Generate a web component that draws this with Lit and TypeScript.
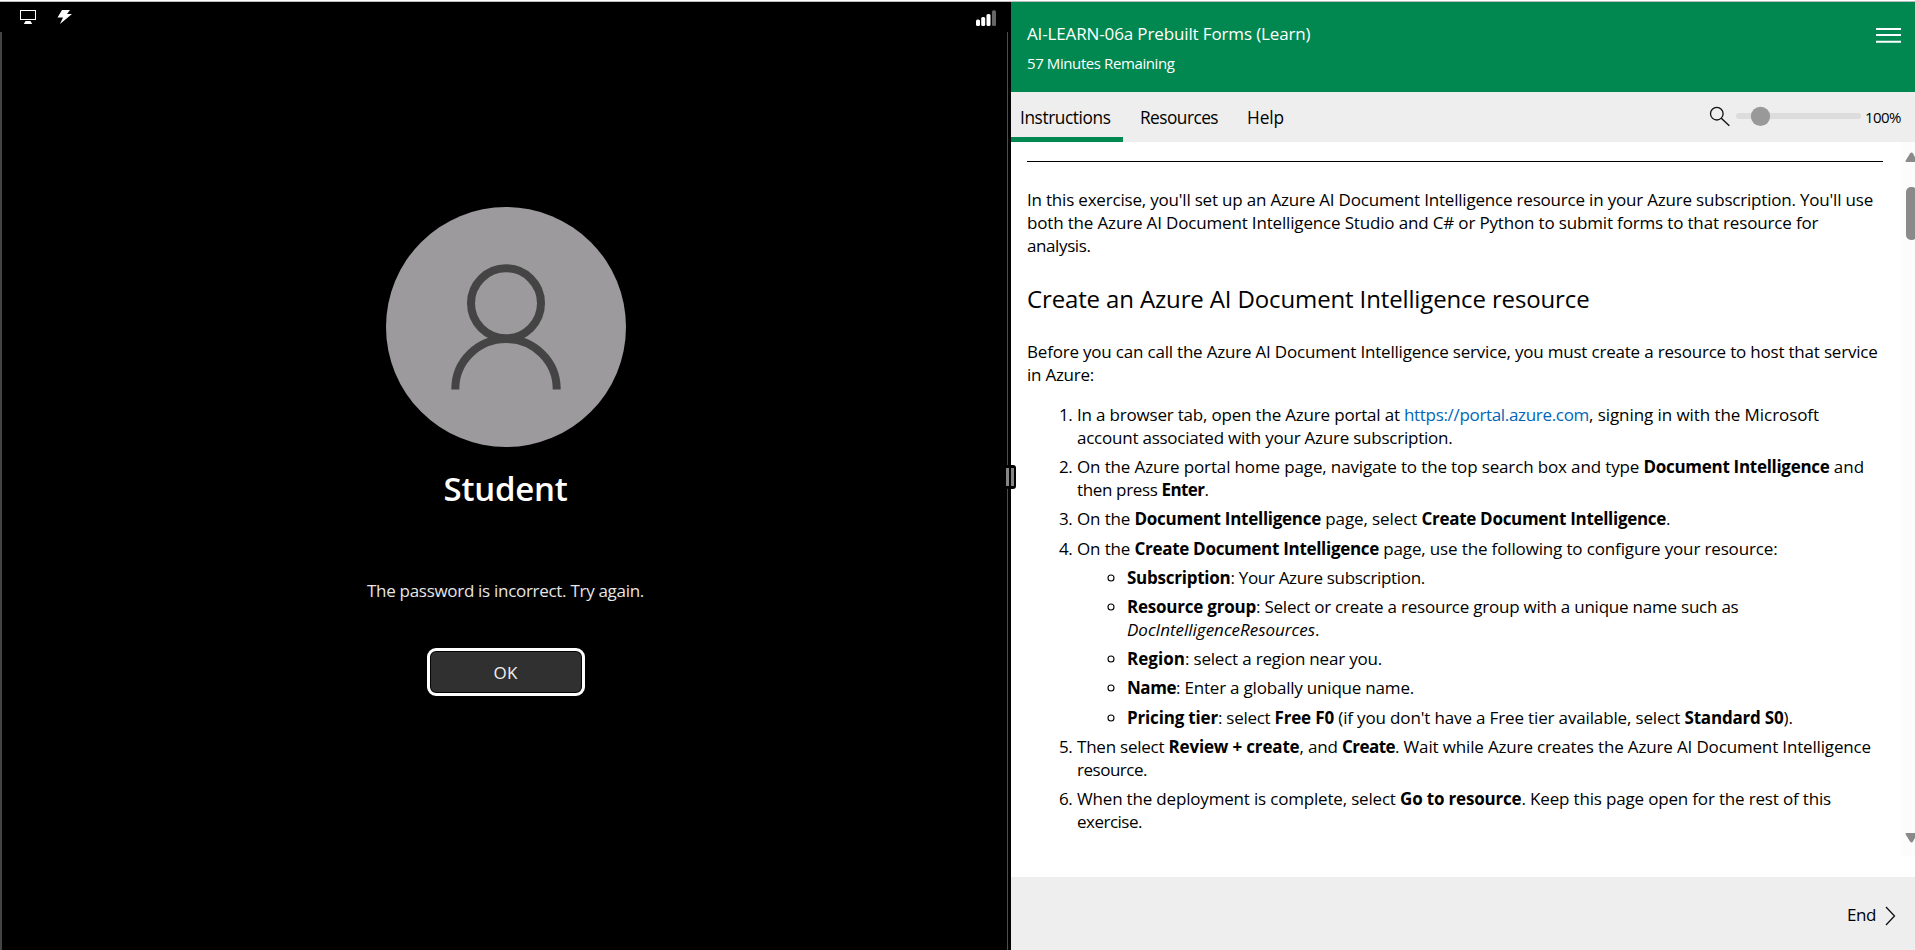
import { LitElement, html, css, TemplateResult } from "lit";
import { customElement, property } from "lit/decorators.js";

/** A run of text tracked so that it occupies exactly `w` pixels. */
@customElement("fit-text")
class FitText extends LitElement {
  @property({ type: Number }) w = 0;
  @property() text = "";

  static styles = css`
    :host { display: inline-block; white-space: pre; vertical-align: baseline; }
    .run { display: inline-block; white-space: pre; }
  `;

  render() {
    return html`<span class="run">${this.text}</span>`;
  }

  updated() {
    this.fit();
    document.fonts.ready.then(() => this.fit());
  }

  private fit() {
    const run = this.renderRoot.querySelector(".run") as HTMLElement;
    if (!run || !this.w) return;
    run.style.letterSpacing = "0px";
    const natural = run.getBoundingClientRect().width;
    run.style.letterSpacing = `${(this.w - natural) / this.text.length}px`;
    this.style.width = `${this.w}px`;
  }
}

type Run = [text: string, width: number, kind?: "b" | "i" | "a"];
type Line = Run[];
interface Item { lines: Line[]; sub?: Item[]; }

const intro: Line[] = [
  [["In this exercise, you'll set up an Azure AI Document Intelligence resource in your Azure subscription. You'll use", 846]],
  [["both the Azure AI Document Intelligence Studio and C# or Python to submit forms to that resource for", 791.3]],
  [["analysis.", 63.5]],
];

const before: Line[] = [
  [["Before you can call the Azure AI Document Intelligence service, you must create a resource to host that service", 850.6]],
  [["in Azure:", 67]],
];

const steps: Item[] = [
  { lines: [
    [["In a browser tab, open the Azure portal at ", 327], ["https://portal.azure.com", 185, "a"], [", signing in with the Microsoft", 230]],
    [["account associated with your Azure subscription.", 375.5]],
  ] },
  { lines: [
    [["On the Azure portal home page, navigate to the top search box and type ", 566.5], ["Document Intelligence", 186, "b"], [" and", 34.5]],
    [["then press ", 84.5], ["Enter", 43, "b"], [".", 4.5]],
  ] },
  { lines: [[["On the ", 57.5], ["Document Intelligence", 186.5, "b"], [" page, select ", 100.5], ["Create Document Intelligence", 244.5, "b"], [".", 4.5]]] },
  {
    lines: [[["On the ", 57.5], ["Create Document Intelligence", 244.5, "b"], [" page, use the following to configure your resource:", 398.5]]],
    sub: [
      { lines: [[["Subscription", 103.5, "b"], [": Your Azure subscription.", 194.5]]] },
      { lines: [[["Resource group", 129, "b"], [": Select or create a resource group with a unique name such as", 482.5]], [["DocIntelligenceResources", 188, "i"], [".", 4.5]]] },
      { lines: [[["Region", 58, "b"], [": select a region near you.", 197]]] },
      { lines: [[["Name", 49, "b"], [": Enter a globally unique name.", 238]]] },
      { lines: [[["Pricing tier", 91, "b"], [": select ", 56.5], ["Free F0", 59.5, "b"], [" (if you don't have a Free tier available, select ", 350.5], ["Standard S0", 99, "b"], [").", 9.5]]] },
    ],
  },
  { lines: [
    [["Then select ", 91.5], ["Review + create", 131, "b"], [", and ", 42.5], ["Create", 53, "b"], [". Wait while Azure creates the Azure AI Document Intelligence", 476]],
    [["resource.", 70]],
  ] },
  { lines: [
    [["When the deployment is complete, select ", 323], ["Go to resource", 121.5, "b"], [". Keep this page open for the rest of this", 309.5]],
    [["exercise.", 65]],
  ] },
];

@customElement("app-root")
class AppRoot extends LitElement {
  static styles = css`
    :host { display: flex; flex-direction: column; width: 1915px; height: 950px; overflow: hidden; background: #fff; color: #000;
      font-family: "Open Sans", "Noto Sans", sans-serif; font-size: 17px; line-height: 23px; }
    * { box-sizing: border-box; }
    svg { display: block; flex: none; }
    .edge { height: 2px; flex: none; background: #fff; border-bottom: 1px solid #b9bdbb; }
    .split { flex: 1; display: flex; min-height: 0; }

    .remote { width: 1011px; flex: none; background: #000; display: flex; flex-direction: column; position: relative; }
    .status { height: 30px; flex: none; display: flex; justify-content: space-between; padding: 0 14px 0 19px; }
    .left-icons { display: flex; }
    .screen { flex: 1; margin-right: 3px; border-left: 2px solid #444; border-right: 1px solid #4d4d4d;
      display: flex; flex-direction: column; align-items: center; padding-top: 175px; padding-left: 2px; color: #fff; }
    .name { font-size: 33px; font-weight: 600; line-height: 44px; margin-top: 20px; }
    .msg { margin-top: 68px; line-height: 24px; color: #e6e6e6; font-size: 17px; }
    .ok { margin-top: 45px; width: 158px; height: 48px; border: 3px solid #fff; border-radius: 9px; background: #303030;
      box-shadow: inset 0 0 0 1px #050505; display: flex; align-items: center; justify-content: center; color: #f0f0f0; }
    .grip { position: absolute; left: 1005px; top: 463px; width: 11px; height: 24px; background: #000; border-radius: 3px; z-index: 2;
      display: flex; gap: 2px; padding: 3px 2px 3px 1px; }
    .grip span { flex: 1; background: #858585; }

    .lab { flex: 1; display: flex; flex-direction: column; min-width: 0; }
    .head { height: 90px; flex: none; background: #008850; color: #fff; display: flex; justify-content: space-between; padding: 20px 14px 0 16px; }
    .title { line-height: 24px; }
    .time { font-size: 15px; line-height: 20px; margin-top: 7px; }
    .burger { margin-top: 6px; }
    .bar { height: 50px; flex: none; background: #eee; display: flex; justify-content: space-between; padding-right: 14px; }
    .tabs { display: flex; gap: 8px; font-size: 17.3px; }
    .tab { padding: 14px 12px 0 9px; line-height: 24px; height: 50px; }
    .tab.on { border-bottom: 5px solid #008850; width: 112px; }
    .zoom { display: flex; font-size: 15px; }
    .pct { line-height: 20px; padding-top: 15px; margin-left: 4px; }
    .body { flex: 1; display: flex; min-height: 0; }
    .doc { width: 891px; flex: none; padding: 19px 0 0 16px; }
    .rule { width: 856px; height: 1px; background: #000; }
    .para { margin-top: 26px; }
    .line { display: block; height: 23px; white-space: nowrap; }
    .h2 { font-size: 24px; line-height: 34px; margin: 25px 0 0; font-weight: 400; }
    .para.second { margin-top: 24px; }
    ol, ul { margin: 0; padding: 0; list-style: none; }
    ol { margin-top: 17px; padding-left: 30px; }
    ul { padding-left: 30px; }
    li { display: flex; margin-bottom: 6.2px; }
    ul li:last-child { margin-bottom: 0; }
    ul { margin-top: 6.2px; }
    .num { width: 20px; flex: none; padding-left: 2px; }
    .ring { width: 20px; flex: none; padding: 8px 0 0 0; }
    .b { font-weight: 700; }
    .i { font-style: italic; }
    .a { color: #0067b8; }
    .scroll { flex: 1; background: #fcfcfc; height: 714px; display: flex; flex-direction: column; overflow: hidden; padding-left: 3px; }
    .thumb { width: 11px; height: 53px; flex: none; margin: 25px 0 0 1px; border-radius: 5px; background: #8a8a8a; }
    .up { margin-top: 10px; }
    .down { margin-top: 593px; }
    .foot { height: 73px; flex: none; background: #eee; display: flex; justify-content: flex-end; padding: 26px 19px 0 0; }
    .foot svg { margin: 3px 0 0 9px; }
    .foot fit-text { line-height: 24px; }
  `;

  private line(l: Line): TemplateResult {
    return html`<span class="line">${l.map(([t, w, k]) => html`<fit-text class=${k ?? "r"} .text=${t} .w=${w}></fit-text>`)}</span>`;
  }

  private item(it: Item, mark: TemplateResult): TemplateResult {
    return html`<li>${mark}<div>
      ${it.lines.map((l) => this.line(l))}
      ${it.sub ? html`<ul>${it.sub.map((s) => this.item(s, html`<span class="ring">
        <svg width="8" height="8" viewBox="0 0 8 8"><circle cx="4" cy="4" r="3" fill="none" stroke="#000" stroke-width="1.1"/></svg></span>`))}</ul>` : ""}
    </div></li>`;
  }

  render() {
    return html`
      <div class="edge"></div>
      <div class="split">
        <section class="remote">
          <div class="status">
            <div class="left-icons">
              <svg width="60" height="30" viewBox="19 2 60 30">
                <rect x="20.5" y="10.5" width="15" height="9" fill="none" stroke="#fff"/>
                <path d="M25.5 21h5l1.7 3h-8.4z" fill="#fff"/>
                <path d="M62 10h8l-3 4h5l-12 10 3-6.500h-5.500z" fill="#fff"/>
              </svg>
            </div>
            <svg width="21" height="30" viewBox="976 2 21 30">
              <rect x="976" y="19.500" width="4" height="6.500" rx="1.500" fill="#fff"/>
              <rect x="981.200" y="17" width="4" height="9" rx="1.500" fill="#fff"/>
              <rect x="986.500" y="14" width="4" height="12" rx="1.500" fill="#fff"/>
              <rect x="992" y="10.300" width="4" height="15.700" rx="1.500" fill="#666"/>
            </svg>
          </div>
          <div class="screen">
            <svg width="240" height="240" viewBox="0 0 240 240">
              <circle cx="120" cy="120" r="120" fill="#9c9a9c"/>
              <g fill="none" stroke="#444" stroke-width="8">
                <circle cx="120" cy="96.300" r="35"/>
                <path d="M69.300 182.500V182a50.700 50 0 0 1 101.400 0v.5"/>
              </g>
            </svg>
            <fit-text class="name" .text=${"Student"} .w=${124}></fit-text>
            <fit-text class="msg" .text=${"The password is incorrect. Try again."} .w=${277}></fit-text>
            <div class="ok"><fit-text .text=${"OK"} .w=${24}></fit-text></div>
          </div>
          <div class="grip"><span></span><span></span></div>
        </section>
        <section class="lab">
          <header class="head">
            <div>
              <div class="title"><fit-text .text=${"AI-LEARN-06a Prebuilt Forms (Learn)"} .w=${283.5}></fit-text></div>
              <div class="time"><fit-text .text=${"57 Minutes Remaining"} .w=${147.5}></fit-text></div>
            </div>
            <svg class="burger" width="25" height="16" viewBox="0 0 25 16">
              <path d="M0 1h25M0 7h25M0 13.700h25" stroke="#fff" stroke-width="1.900"/>
            </svg>
          </header>
          <nav class="bar">
            <div class="tabs">
              <div class="tab on"><fit-text .text=${"Instructions"} .w=${90.5}></fit-text></div>
              <div class="tab"><fit-text .text=${"Resources"} .w=${78}></fit-text></div>
              <div class="tab"><fit-text .text=${"Help"} .w=${37}></fit-text></div>
            </div>
            <div class="zoom">
              <svg width="152" height="50" viewBox="1709 92 152 50">
                <circle cx="1716.800" cy="113.700" r="6.300" fill="none" stroke="#111" stroke-width="1.300"/>
                <path d="M1721.300 118.200l8 7.600" stroke="#111" stroke-width="1.400"/>
                <rect x="1736" y="113" width="125" height="6" rx="3" fill="#dcdcdc"/>
                <circle cx="1760.500" cy="116.400" r="9.600" fill="#999"/>
              </svg>
              <div class="pct"><fit-text .text=${"100%"} .w=${36}></fit-text></div>
            </div>
          </nav>
          <div class="body">
            <article class="doc">
              <div class="rule"></div>
              <div class="para">${intro.map((l) => this.line(l))}</div>
              <h2 class="h2"><fit-text .text=${"Create an Azure AI Document Intelligence resource"} .w=${562.5}></fit-text></h2>
              <div class="para second">${before.map((l) => this.line(l))}</div>
              <ol>${steps.map((s, n) => this.item(s, html`<span class="num"><fit-text .text=${`${n + 1}.`} .w=${13}></fit-text></span>`))}</ol>
            </article>
            <div class="scroll">
              <svg class="up" width="12" height="10" viewBox="0 0 12 10"><path d="M1.500 10Q0 10 .7 8.600L5 1.500q1.500-2 3 0L12.500 10z" fill="#8a8a8a"/></svg>
              <div class="thumb"></div>
              <svg class="down" width="12" height="10" viewBox="0 0 12 10"><path d="M1.500 0Q0 0 .7 1.400L5 8.500q1.500 2 3 0L12.500 0z" fill="#8a8a8a"/></svg>
            </div>
          </div>
          <footer class="foot">
            <fit-text .text=${"End"} .w=${29}></fit-text>
            <svg width="11" height="20" viewBox="0 0 11 20"><path d="M1 1l8.500 9L1 19" fill="none" stroke="#111" stroke-width="1.300"/></svg>
          </footer>
        </section>
      </div>`;
  }
}
